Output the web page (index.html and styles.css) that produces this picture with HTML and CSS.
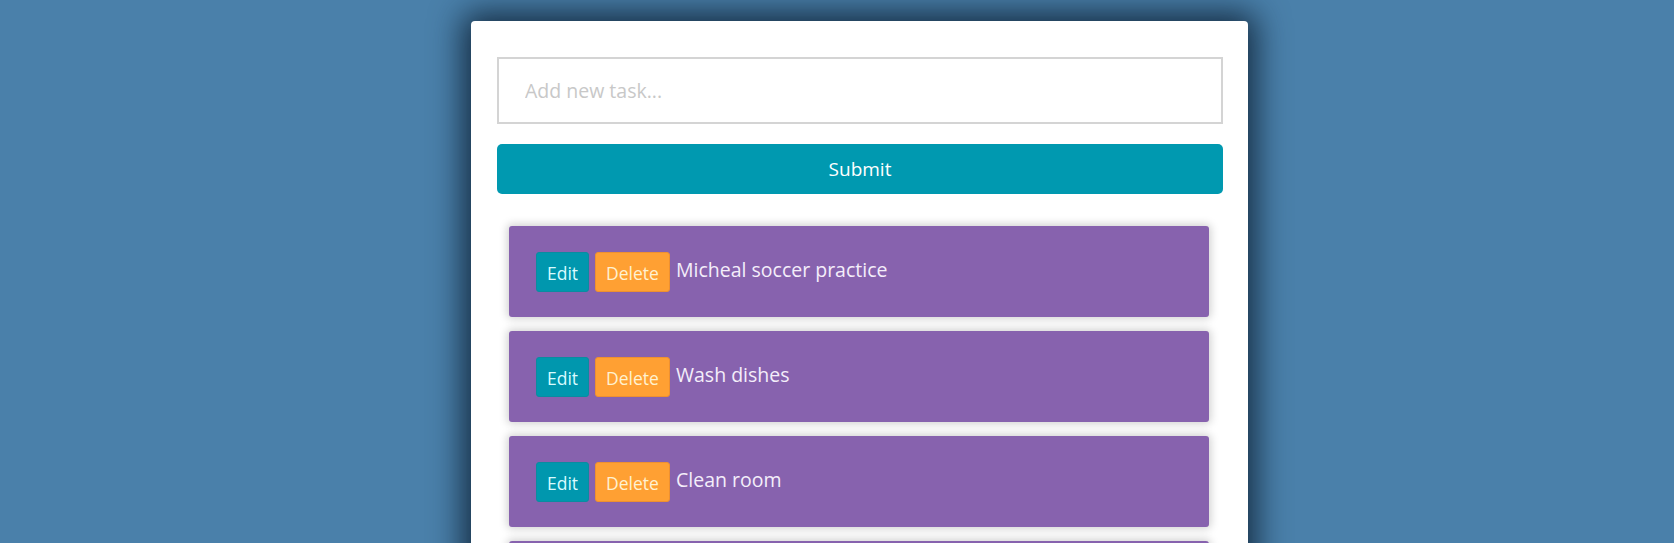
FILE: index.html
```html
<!DOCTYPE html>
<html lang="en">
<head>
<meta charset="utf-8">
<title>Todo</title>
<link rel="stylesheet" href="styles.css">
</head>
<body>
<main class="card">
  <form class="task-form">
    <input class="task-input" type="text" placeholder="Add new task...">
    <button class="submit" type="button">Submit</button>
  </form>
  <ul class="task-list">
    <li class="task"><button class="btn edit">Edit</button><button class="btn delete">Delete</button><span class="task-text">Micheal soccer practice</span></li>
    <li class="task"><button class="btn edit">Edit</button><button class="btn delete">Delete</button><span class="task-text">Wash dishes</span></li>
    <li class="task"><button class="btn edit">Edit</button><button class="btn delete">Delete</button><span class="task-text">Clean room</span></li>
    <li class="task" aria-hidden="true"></li>
  </ul>
</main>
</body>
</html>
```
FILE: styles.css
```css
* { box-sizing: border-box; }
html, body { height: 100%; }
body {
  margin: 0;
  background: #4a80aa;
  font-family: "Open Sans", "Noto Sans", sans-serif;
  overflow: hidden;
}
.card {
  margin: 21px 0 0 471px;
  width: 777px;
  min-height: 700px;
  background: #fff;
  border-radius: 4px;
  padding: 36px 25px 0 26px;
  box-shadow: 0 0 32px 8px rgba(8, 22, 40, 0.8);
}
.task-form {
  display: flex;
  flex-direction: column;
  gap: 20px;
}
.task-input {
  height: 67px;
  border: 2px solid #d4d4d4;
  padding: 0 0 0 26px;
  font-family: inherit;
  font-size: 19.5px;
  color: #333;
  outline: none;
}
.task-input::placeholder { color: #c8c8c8; }
.submit {
  height: 50px;
  border: none;
  border-radius: 5px;
  background: #0099b0;
  color: #fff;
  font-family: inherit;
  font-size: 19px;
}
.task-list {
  list-style: none;
  margin: 32px 0 0;
  padding: 0 14px 0 12px;
  display: flex;
  flex-direction: column;
  gap: 14px;
}
.task {
  height: 91px;
  background: #8762ae;
  border-radius: 3px;
  box-shadow: 0 0 8px 2px rgba(0, 0, 0, 0.18);
  display: flex;
  align-items: center;
  padding: 0 27px;
  gap: 6px;
}
.btn {
  height: 40px;
  border-radius: 3px;
  font-family: inherit;
  font-size: 17.5px;
  padding: 2px 0 0;
}
.edit {
  width: 53px;
  background: #0097ae;
  border: 1px solid #0a8ca0;
  color: #d8fbff;
}
.delete {
  width: 75px;
  background: #ffa033;
  border: 1px solid #ee9030;
  color: #fff2d0;
}
.task-text {
  color: #f4eefa;
  font-size: 19.5px;
  margin-top: -4px;
}
```
